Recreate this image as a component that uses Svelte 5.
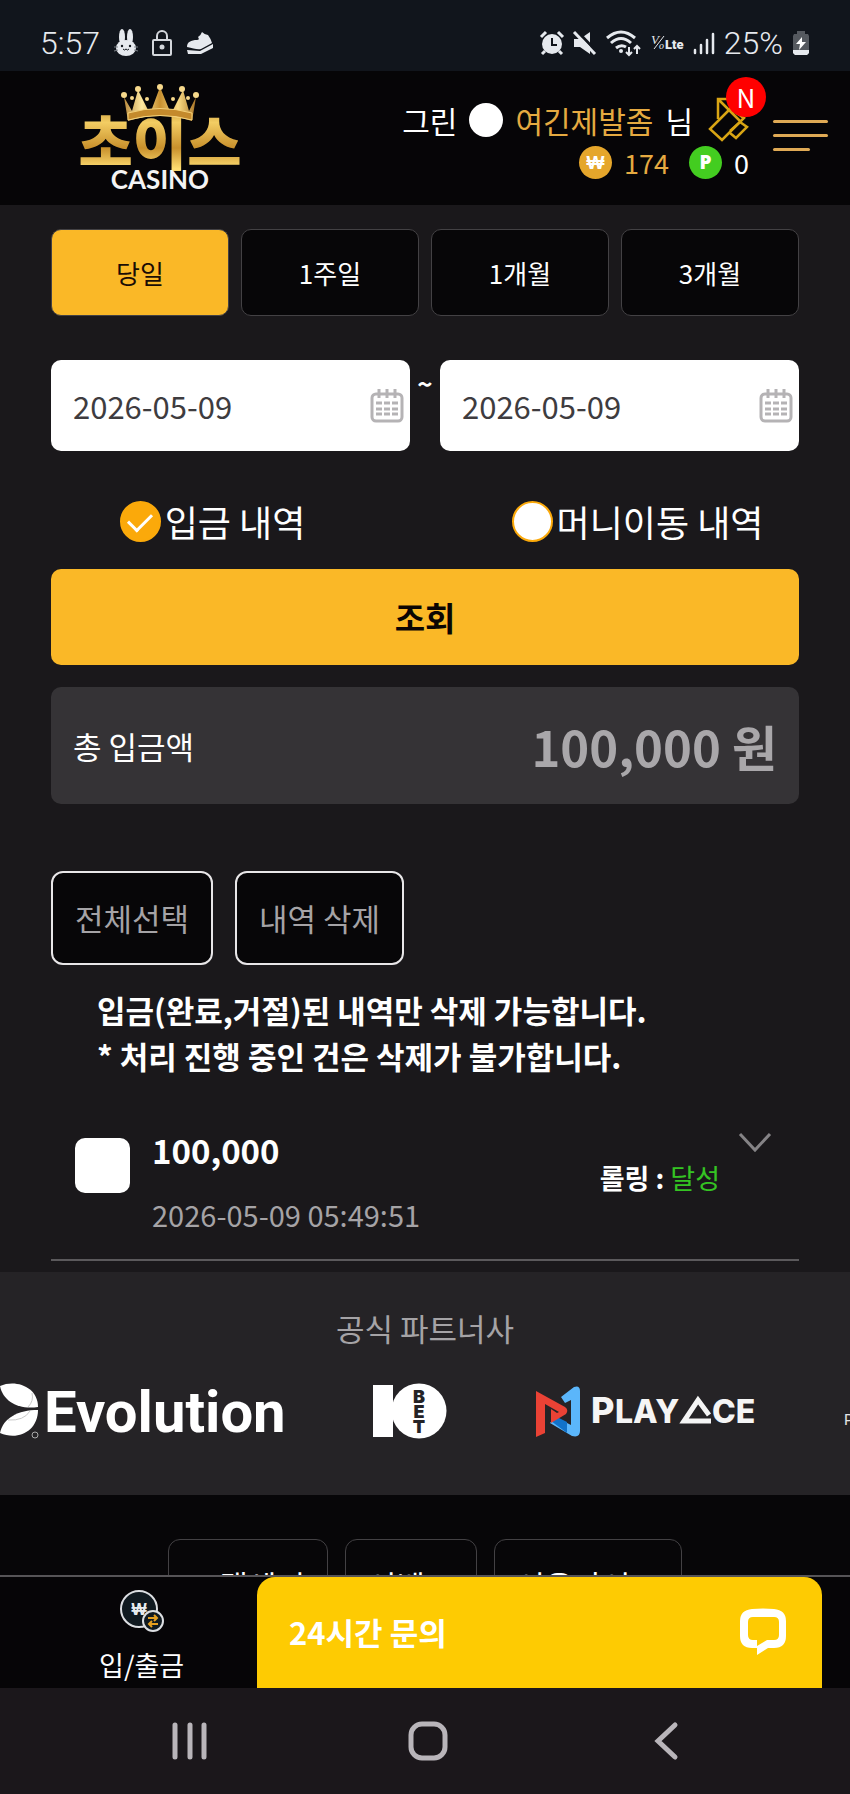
<script lang="ts">
    interface Deposit {
        id: number;
        amount: string;
        date: string;
        status: string;
    }

    const periods: string[] = ['당일', '1주일', '1개월', '3개월'];
    const footerLinks: string[] = ['고객센터', '이벤트', '이용가이드'];
    const deposits: Deposit[] = [
        {id: 1, amount: '100,000', date: '2026-05-09 05:49:51', status: '달성'}
    ];

    let period: string = '당일';
    let dateFrom: string = '2026-05-09';
    let dateTo: string = '2026-05-09';
    let kind: string = 'deposit';
    let selected: number[] = [];

    function selectAll() {
        selected = deposits.map(d => d.id);
    }
</script>

<div class="page">
    <div class="status">
        <div class="status-side">
            <span>5:57</span>
            <svg width="24" height="28" viewBox="0 0 24 28">
                <g fill="#e6e9ee">
                    <ellipse cx="8" cy="8" rx="3" ry="8"/>
                    <ellipse cx="16" cy="8" rx="3" ry="8"/>
                    <ellipse cx="12" cy="19" rx="10" ry="8"/>
                </g>
                <g stroke="#11151c" fill="none">
                    <path d="M9 20 q1.500 2 3 0 q1.500 2 3 0"/>
                    <path d="M0 18h4M0 22l4-1M24 18h-4M24 22l-4-1" stroke="#7b8087"/>
                </g>
                <circle cx="8" cy="17" r="1.200" fill="#11151c"/>
                <circle cx="16" cy="17" r="1.200" fill="#11151c"/>
            </svg>
            <svg width="20" height="26" viewBox="0 0 20 26" fill="none" stroke="#d4d7dc" stroke-width="2">
                <rect x="1" y="10" width="18" height="15" rx="1"/>
                <path d="M5 10V6a5 5 0 0 1 10 0v4"/>
                <circle cx="10" cy="17" r="2.500" fill="#d4d7dc" stroke="none"/>
            </svg>
            <svg width="28" height="24" viewBox="0 0 28 24" fill="#e6e9ee">
                <path d="M1 16C1 11 5 9 11 9q3 0 1-3 3-2 4-5 3 3 6 3 3 4 4 8l-11 6c-4 1-8-1-14-2z"/>
                <path d="M1 19l13 1 13-7v4l-12 6H2z"/>
            </svg>
        </div>
        <div class="status-side right">
            <svg width="24" height="24" viewBox="0 0 24 24">
                <circle cx="12" cy="13" r="10" fill="#e6e9ee"/>
                <path d="M1 6l5-5M23 6l-5-5M5 20l-3 3M19 20l3 3" stroke="#e6e9ee" stroke-width="3"/>
                <path d="M12 7v7h5" fill="none" stroke="#11151c" stroke-width="2"/>
            </svg>
            <svg width="24" height="24" viewBox="0 0 24 24">
                <path d="M1 8h6l10-7v22L7 16H1z" fill="#e6e9ee"/>
                <path d="M3-1l22 23" stroke="#11151c" stroke-width="3"/>
                <path d="M1 1l21 22" stroke="#e6e9ee" stroke-width="3"/>
            </svg>
            <svg width="36" height="26" viewBox="0 0 36 26" fill="none" stroke="#e6e9ee" stroke-width="3">
                <path d="M1 8Q15-4 29 8M5 13Q15 4 25 13M10 18q5-4 10-1"/>
                <circle cx="15" cy="21" r="2" fill="#e6e9ee" stroke="none"/>
                <path d="M23 17v8M20 22l3 3 3-3M31 24v-8M28 19l3-3 3 3" stroke-width="2"/>
            </svg>
            <svg width="33" height="20" viewBox="0 0 33 20" fill="#e6e9ee">
                <text x="0" y="11" font-family="Liberation Serif, serif" font-style="italic" font-size="13">V</text>
                <path d="M3 16L13 3" stroke="#e6e9ee"/>
                <text x="8" y="16" font-family="Liberation Serif, serif" font-style="italic" font-size="10">o</text>
                <text x="14" y="16" font-family="Roboto, sans-serif" font-weight="900" font-size="13">Lte</text>
            </svg>
            <svg width="22" height="24" viewBox="0 0 22 24" stroke="#e6e9ee" stroke-width="2.500" stroke-linecap="round">
                <path d="M2 19v3M8 14v8M14 9v13M20 3v19"/>
            </svg>
            <span>25%</span>
            <svg width="18" height="26" viewBox="0 0 18 26">
                <path d="M5 1h8v3h3l1 2v17l-2 2H3l-2-2V6l1-2h3z" fill="#55595f"/>
                <path d="M1 20h16v3l-2 2H3l-2-2z" fill="#e6e9ee"/>
                <path d="M10 7l-6 7h4l-1 6 7-8h-4z" fill="#fff"/>
            </svg>
        </div>
    </div>

    <header>
        <a class="logo" href="#home" aria-label="초이스 CASINO">
            <svg width="165" height="112" viewBox="0 0 165 112">
                <defs>
                    <linearGradient id="gold" x1="0" y1="0" x2="0" y2="1">
                        <stop offset="0" stop-color="#a9761f"/>
                        <stop offset="0.300" stop-color="#f3cd63"/>
                        <stop offset="0.600" stop-color="#c8902c"/>
                        <stop offset="0.850" stop-color="#ffdf73"/>
                        <stop offset="1" stop-color="#b87c21"/>
                    </linearGradient>
                    <linearGradient id="crown" x1="0" y1="0" x2="1" y2="0">
                        <stop offset="0" stop-color="#b98a3c"/>
                        <stop offset="0.250" stop-color="#ffe9a0"/>
                        <stop offset="0.500" stop-color="#c8902f"/>
                        <stop offset="0.750" stop-color="#fbdc85"/>
                        <stop offset="1" stop-color="#a87324"/>
                    </linearGradient>
                </defs>
                <text x="82" y="82" text-anchor="middle" fill="url(#gold)" font-family="Noto Sans CJK KR, sans-serif" font-weight="900" font-size="59">초이스</text>
                <path d="M50 38L46 14l8 14 6-21 12 24L82 4l11 27 12-24 6 21 7-14-4 24q-32-10-64 0z" fill="url(#crown)"/>
                <path d="M50 30q32-9 64 0v7q-32-9-64 0z" fill="#c48a2c" stroke="#f5d27a"/>
                <g fill="#f7d98c">
                    <circle cx="46" cy="12" r="3"/>
                    <circle cx="60" cy="6" r="3"/>
                    <circle cx="82" cy="4" r="3"/>
                    <circle cx="104" cy="6" r="3"/>
                    <circle cx="118" cy="12" r="3"/>
                    <circle cx="54" cy="15" r="2"/>
                    <circle cx="69" cy="16" r="2"/>
                    <circle cx="95" cy="16" r="2"/>
                    <circle cx="110" cy="15" r="2"/>
                </g>
                <text x="82" y="106" text-anchor="middle" fill="#f4f4f4" font-family="Lato, sans-serif" font-weight="700" font-size="26">CASINO</text>
            </svg>
        </a>
        <div class="user">
            <div class="user-row">
                <span>그린</span>
                <i class="dot"></i>
                <span class="name">여긴제발좀</span>
                <span>님</span>
                <button class="coupon" aria-label="쿠폰">
                    <svg width="40" height="46" viewBox="0 0 40 46" fill="none" stroke="#d9a514" stroke-width="2.500">
                        <path d="M9 22V2h10l15 19M9 2l22 22"/>
                        <path d="M21 12L1 32l12 11 22-22z"/>
                        <path d="M21 34l10-9 7 5-11 11-6-5"/>
                    </svg>
                    <span class="badge">N</span>
                </button>
            </div>
            <div class="user-row money">
                <i class="coin">₩</i>
                <span class="name">174</span>
                <i class="coin green">P</i>
                <span>0</span>
            </div>
        </div>
        <button class="menu" aria-label="메뉴"><i></i><i></i><i></i></button>
    </header>

    <main>
        <div class="periods">
            {#each periods as p}
                <button class:active={period === p} on:click={() => period = p}>{p}</button>
            {/each}
        </div>

        <div class="dates">
            <div class="date">
                <input type="text" aria-label="시작일" bind:value={dateFrom}/>
                <svg width="34" height="34" viewBox="0 0 34 34" fill="none" stroke="#b5b3b5" stroke-width="3">
                    <rect x="2" y="5" width="30" height="27" rx="4"/>
                    <path d="M9 0v9M17 0v9M25 0v9"/>
                    <path d="M6 14h22M6 20h22M6 25h22" stroke-dasharray="6 2"/>
                </svg>
            </div>
            <span class="tilde">~</span>
            <div class="date">
                <input type="text" aria-label="종료일" bind:value={dateTo}/>
                <svg width="34" height="34" viewBox="0 0 34 34" fill="none" stroke="#b5b3b5" stroke-width="3">
                    <rect x="2" y="5" width="30" height="27" rx="4"/>
                    <path d="M9 0v9M17 0v9M25 0v9"/>
                    <path d="M6 14h22M6 20h22M6 25h22" stroke-dasharray="6 2"/>
                </svg>
            </div>
        </div>

        <div class="kinds">
            <label><input type="radio" value="deposit" bind:group={kind}/>입금 내역</label>
            <label><input type="radio" value="move" bind:group={kind}/>머니이동 내역</label>
        </div>

        <button class="search">조회</button>

        <div class="total">
            <span>총 입금액</span>
            <strong>100,000 원</strong>
        </div>

        <div class="actions">
            <button class="btn" on:click={selectAll}>전체선택</button>
            <button class="btn">내역 삭제</button>
        </div>

        <p class="notice">입금(완료,거절)된 내역만 삭제 가능합니다.<br/>* 처리 진행 중인 건은 삭제가 불가합니다.</p>

        {#each deposits as d}
            <div class="deposit">
                <input type="checkbox" aria-label={d.amount} value={d.id} bind:group={selected}/>
                <div class="info">
                    <strong>{d.amount}</strong>
                    <span>{d.date}</span>
                </div>
                <p class="rolling"><b>롤링 :</b> {d.status}</p>
                <button class="more" aria-label="상세">
                    <svg width="32" height="20" viewBox="0 0 32 20" fill="none" stroke="#858386" stroke-width="3">
                        <path d="M1 1l15 16L31 1"/>
                    </svg>
                </button>
            </div>
        {/each}
    </main>

    <section class="partners">
        <h2>공식 파트너사</h2>
        <div class="logos">
            <svg width="287" height="56" viewBox="0 0 287 56" fill="#fff">
                <path d="M0 3C16-4 38 4 38 24 18 27 3 18 0 3z"/>
                <path d="M0 50C3 35 18 27 38 27 38 48 18 58 0 50z"/>
                <path d="M32 10Q34 18 28 24M8 37Q24 38 30 28" fill="none" stroke="#c9c9c9"/>
                <circle cx="35" cy="52" r="3" fill="none" stroke="#aaa"/>
                <text x="44" y="49" font-family="Roboto, sans-serif" font-weight="700" font-size="58">Evolution</text>
            </svg>
            <svg width="74" height="56" viewBox="0 0 74 56">
                <rect y="2" width="20" height="52" fill="#fff"/>
                <circle cx="46" cy="28" r="27.500" fill="#fff"/>
                <g fill="#252326" text-anchor="middle" font-family="Inter, sans-serif" font-weight="900" font-size="18">
                    <text x="46" y="20">B</text>
                    <text x="46" y="35">E</text>
                    <text x="46" y="50">T</text>
                </g>
            </svg>
            <svg width="225" height="56" viewBox="0 0 225 56">
                <path d="M28 14L41 4q6-2 6 4v40q0 7-8 5L17 40l5-6 16 8V17l-6 3z" fill="#5bb6fb"/>
                <path d="M18 38l4-5 12 6v11z" fill="#1272c9"/>
                <path d="M3 8l29 16q4 3 1 7L18 40V26l6 4 2-1-14-8v29l-9 4z" fill="#ea4235"/>
                <g fill="#f5f5f5" font-family="Inter, sans-serif" font-weight="800">
                    <text x="58" y="40" font-size="36">P</text>
                    <text x="82" y="40" font-size="32">LAY</text>
                    <text x="179" y="40" font-size="32">CE</text>
                </g>
                <path d="M178 38h-27l14-21 11 15" fill="none" stroke="#f5f5f5" stroke-width="5"/>
            </svg>
            <svg width="120" height="56" viewBox="0 0 120 56" fill="#e5e5e5">
                <text x="0" y="42" font-family="Roboto, sans-serif" font-size="15">PLAY</text>
            </svg>
        </div>
    </section>

    <footer>
        {#each footerLinks as link}
            <a class="btn" href="#footer">{link}</a>
        {/each}
    </footer>
</div>

<div class="bottom">
    <div class="tabs">
        <a href="#money">
            <svg width="46" height="44" viewBox="0 0 46 44" fill="#101a20" stroke="#dcdfe2" stroke-width="2">
                <circle cx="20" cy="20" r="18"/>
                <text x="20" y="26" text-anchor="middle" fill="#e8ecef" stroke="none" font-family="Open Sans, sans-serif" font-weight="800" font-size="16">₩</text>
                <circle cx="34" cy="32" r="10"/>
                <path d="M29 29h9M35 26l3 3-3 3M39 35h-9M33 32l-3 3 3 3" fill="none" stroke="#e5a020"/>
            </svg>
            <span>입/출금</span>
        </a>
        <button class="chat">
            <span>24시간 문의</span>
            <svg width="46" height="46" viewBox="0 0 46 46" fill="#fff" fill-rule="evenodd">
                <path d="M12 0Q23-1 34 0Q46 1 46 12V27Q46 39 34 39H28L17 46V39H12Q0 39 0 27V12Q0 1 12 0ZM13 8Q8 8 8 13V26Q8 31 13 31H17V37L27 31H34Q39 31 39 26V13Q39 8 34 8Z"/>
            </svg>
        </button>
    </div>
    <nav>
        <button aria-label="최근 앱">
            <svg width="40" height="40" viewBox="0 0 40 40" stroke="#b9b5ba" stroke-width="5" stroke-linecap="round">
                <path d="M5 4v32M20 4v32M34 4v32"/>
            </svg>
        </button>
        <button aria-label="홈">
            <svg width="40" height="40" viewBox="0 0 40 40" fill="none" stroke="#b9b5ba" stroke-width="5">
                <rect x="3" y="3" width="34" height="34" rx="11"/>
            </svg>
        </button>
        <button aria-label="뒤로">
            <svg width="40" height="40" viewBox="0 0 40 40" fill="none" stroke="#b9b5ba" stroke-width="5" stroke-linecap="round">
                <path d="M29 4L12 20l17 16"/>
            </svg>
        </button>
    </nav>
</div>

<style>
    :global(body) {
        background: #070608;
        color: #fff;
        font-family: "Noto Sans CJK KR", sans-serif;
    }

    * {
        box-sizing: border-box;
    }

    svg {
        display: block;
        flex: none;
        overflow: visible;
    }

    button {
        font-family: inherit;
        color: inherit;
        cursor: pointer;
        padding: 0;
        border: none;
        background: none;
    }

    a {
        color: inherit;
        text-decoration: none;
    }

    .status {
        display: flex;
        justify-content: space-between;
        align-items: center;
        height: 71px;
        padding: 14px 40px 0;
        background: #11151c;
        font-family: Roboto, sans-serif;
        font-weight: 300;
        font-size: 32px;
        color: #e6e9ee;
    }

    .status-side {
        display: flex;
        align-items: center;
        gap: 14px;
    }

    .status-side.right {
        gap: 9px;
    }

    header {
        display: flex;
        align-items: flex-start;
        height: 134px;
        padding: 12px 22px 0 78px;
        background: #060507;
    }

    .user {
        display: flex;
        flex-direction: column;
        align-items: flex-end;
        margin-left: auto;
        padding-top: 14px;
    }

    .user-row {
        display: flex;
        align-items: center;
        gap: 12px;
        height: 46px;
        font-size: 30px;
    }

    .user-row.money {
        height: 38px;
        font-size: 27px;
    }

    .name {
        color: #e5aa41;
    }

    .dot {
        width: 34px;
        height: 34px;
        border-radius: 50%;
        background: #fff;
    }

    .coupon {
        position: relative;
        margin-left: 4px;
    }

    .badge {
        position: absolute;
        top: -20px;
        right: -17px;
        width: 40px;
        border-radius: 50%;
        background: #f00;
        color: #fff;
        font-size: 26px;
        line-height: 40px;
    }

    .coin {
        width: 33px;
        border-radius: 50%;
        background: #e5a62b;
        font-family: "Open Sans", sans-serif;
        font-size: 19px;
        font-style: normal;
        font-weight: 800;
        line-height: 33px;
        text-align: center;
    }

    .coin.green {
        margin-left: 8px;
        background: #43cd20;
    }

    .menu {
        display: flex;
        flex-direction: column;
        gap: 11px;
        width: 55px;
        margin: 37px 0 0 24px;
    }

    .menu i {
        width: 100%;
        height: 3px;
        border-radius: 2px;
        background: #dfaa55;
    }

    .menu i:last-child {
        width: 37px;
    }

    main {
        padding: 24px 51px 12px;
        background: #1a181b;
    }

    .periods {
        display: grid;
        grid-template-columns: repeat(4, 1fr);
        gap: 12px;
    }

    .periods button {
        height: 87px;
        border: 1px solid #434144;
        border-radius: 10px;
        background: #070608;
        font-size: 26px;
    }

    .periods button.active {
        background: #fab827;
        color: #1a0d05;
    }

    .dates {
        display: flex;
        margin-top: 44px;
    }

    .date {
        display: flex;
        flex: 1;
        align-items: center;
        min-width: 0;
        height: 91px;
        padding: 0 6px 0 22px;
        border-radius: 10px;
        background: #fff;
    }

    .date input {
        flex: 1;
        min-width: 0;
        padding: 0;
        border: none;
        outline: none;
        background: none;
        color: #3e3c3f;
        font-family: inherit;
        font-size: 31px;
    }

    .tilde {
        width: 30px;
        font-size: 26px;
        font-weight: 700;
        line-height: 46px;
        text-align: center;
    }

    .kinds {
        display: grid;
        grid-template-columns: 1fr 1fr;
        margin: 40px -51px 18px;
    }

    .kinds label {
        display: flex;
        justify-content: center;
        align-items: center;
        gap: 4px;
        font-size: 36px;
        line-height: 60px;
    }

    .kinds input {
        appearance: none;
        display: flex;
        justify-content: center;
        width: 41px;
        height: 41px;
        margin: 0;
        border: 2px solid #fba90a;
        border-radius: 50%;
        background: #fff;
    }

    .kinds input:checked {
        background: #fba90a;
    }

    .kinds input:checked::after {
        content: "";
        width: 11px;
        height: 20px;
        margin-top: 5px;
        border: solid #fff;
        border-width: 0 3px 3px 0;
        transform: rotate(45deg);
    }

    .search {
        display: block;
        width: 100%;
        height: 96px;
        border-radius: 10px;
        background: #fab827;
        color: #0b0503;
        font-size: 33px;
        font-weight: 700;
    }

    .total {
        display: flex;
        justify-content: space-between;
        align-items: center;
        height: 117px;
        margin-top: 22px;
        padding: 0 22px;
        border-radius: 10px;
        background: #353336;
        font-size: 31px;
    }

    .total strong {
        color: #a9a7aa;
        font-size: 49px;
    }

    .actions {
        display: flex;
        gap: 22px;
        margin-top: 67px;
    }

    .btn {
        height: 94px;
        padding: 0 22px;
        border: 2px solid #e8e6e8;
        border-radius: 12px;
        background: #070608;
        color: #a5a3a6;
        font-size: 31px;
        line-height: 90px;
    }

    .notice {
        margin: 22px 0 0 46px;
        font-size: 31px;
        font-weight: 700;
        line-height: 46px;
    }

    .deposit {
        display: flex;
        height: 141px;
        margin-top: 41px;
        padding: 0 28px 0 24px;
        border-bottom: 2px solid #5b595c;
    }

    .deposit input {
        appearance: none;
        width: 55px;
        height: 55px;
        margin: 18px 22px 0 0;
        border-radius: 10px;
        background: #fff;
    }

    .deposit input:checked {
        background: #fba90a;
    }

    .info {
        display: flex;
        flex-direction: column;
        gap: 14px;
        padding-top: 5px;
        line-height: 50px;
    }

    .info strong {
        font-size: 33px;
    }

    .info span {
        color: #a5a3a6;
        font-size: 29px;
    }

    .rolling {
        margin: 35px 19px 0 auto;
        color: #35c423;
        font-size: 27px;
        line-height: 46px;
    }

    .rolling b {
        color: #fff;
    }

    .more {
        align-self: flex-start;
        margin-top: 13px;
    }

    .partners {
        height: 223px;
        margin-top: -1px;
        padding-top: 33px;
        background: #252326;
        overflow: hidden;
    }

    .partners h2 {
        margin: 0;
        color: #a5a3a6;
        font-size: 31px;
        font-weight: 400;
        line-height: 46px;
        text-align: center;
    }

    .logos {
        display: flex;
        gap: 86px;
        margin-top: 32px;
    }

    footer {
        display: flex;
        justify-content: center;
        gap: 17px;
        padding-top: 44px;
    }

    footer .btn {
        border: 1px solid #434144;
        color: #fff;
    }

    .bottom {
        position: fixed;
        right: 0;
        bottom: 0;
        left: 0;
    }

    .tabs {
        position: relative;
        display: grid;
        grid-template-columns: repeat(3, 1fr);
        height: 113px;
        border-top: 2px solid #565457;
        background: #060507;
    }

    .tabs a {
        display: flex;
        flex-direction: column;
        align-items: center;
        gap: 9px;
        padding-top: 12px;
        font-size: 27px;
        line-height: 46px;
    }

    .chat {
        position: absolute;
        top: 0;
        right: 28px;
        bottom: 0;
        left: 257px;
        display: flex;
        justify-content: space-between;
        align-items: center;
        padding: 0 36px 2px 32px;
        border-radius: 18px 18px 0 0;
        background: #fecb02;
        color: #fff;
        font-size: 31px;
        font-weight: 700;
    }

    nav {
        display: flex;
        justify-content: center;
        gap: 198px;
        height: 106px;
        padding-left: 5px;
        background: #1b171b;
    }
</style>
